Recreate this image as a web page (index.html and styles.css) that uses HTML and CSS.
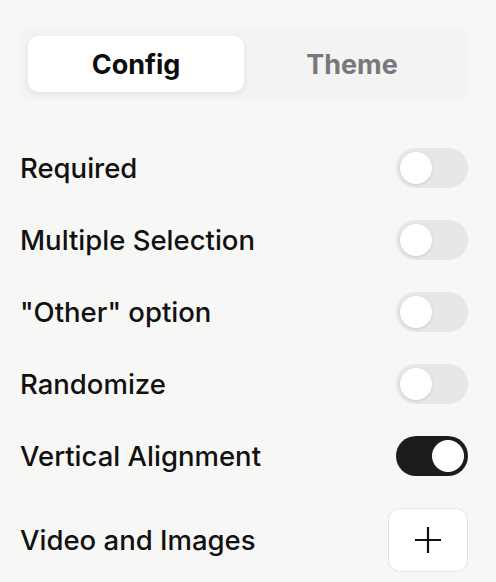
FILE: index.html
```html
<!DOCTYPE html>
<html>
<head>
<meta charset="utf-8">
<link rel="stylesheet" href="styles.css">
</head>
<body>
<div class="panel">
  <div class="tabs">
    <div class="tab active">Config</div>
    <div class="tab">Theme</div>
  </div>
  <div class="list">
    <div class="row"><span class="label">Required</span><span class="toggle"><span class="knob"></span></span></div>
    <div class="row"><span class="label">Multiple Selection</span><span class="toggle"><span class="knob"></span></span></div>
    <div class="row"><span class="label">"Other" option</span><span class="toggle"><span class="knob"></span></span></div>
    <div class="row"><span class="label">Randomize</span><span class="toggle"><span class="knob"></span></span></div>
    <div class="row"><span class="label">Vertical Alignment</span><span class="toggle on"><span class="knob"></span></span></div>
    <div class="row"><span class="label">Video and Images</span>
      <span class="add-btn"><svg width="28" height="28" viewBox="0 0 28 28"><path d="M14 1V27M1 14H27" stroke="#111" stroke-width="2.2" fill="none"/></svg></span>
    </div>
  </div>
</div>
</body>
</html>
```
FILE: styles.css
```css
html, body {
  margin: 0;
  padding: 0;
  background: #f7f7f6;
}
body {
  font-family: Inter, "Noto Sans", sans-serif;
  color: #111;
}
.panel {
  width: 448px;
  padding: 28px 28px 0 20px;
}
.tabs {
  display: flex;
  background: #f3f3f3;
  border-radius: 12px;
  padding: 8px;
}
.tab {
  flex: 1;
  height: 56px;
  display: flex;
  align-items: center;
  justify-content: center;
  font-size: 27px;
  font-weight: 700;
  color: #78787c;
  border-radius: 10px;
}
.tab.active {
  background: #fff;
  color: #0d0d0d;
  box-shadow: 0 2px 6px rgba(0,0,0,0.08);
}
.list {
  margin-top: 32px;
}
.row {
  display: flex;
  align-items: center;
  justify-content: space-between;
  padding: 16px 0;
}
.label {
  font-size: 27.5px;
  font-weight: 500;
  color: #111;
}
.toggle {
  width: 72px;
  height: 40px;
  border-radius: 20px;
  background: #e7e7e9;
  padding: 4px;
  box-sizing: border-box;
  display: flex;
}
.toggle.on {
  background: #1c1c1e;
  justify-content: flex-end;
}
.knob {
  width: 32px;
  height: 32px;
  border-radius: 50%;
  background: #fff;
  box-shadow: 0 1px 3px rgba(0,0,0,0.12);
}
.add-btn {
  width: 80px;
  height: 64px;
  box-sizing: border-box;
  border: 1px solid #e4e4e4;
  border-radius: 12px;
  background: #fff;
  display: flex;
  align-items: center;
  justify-content: center;
}
```
